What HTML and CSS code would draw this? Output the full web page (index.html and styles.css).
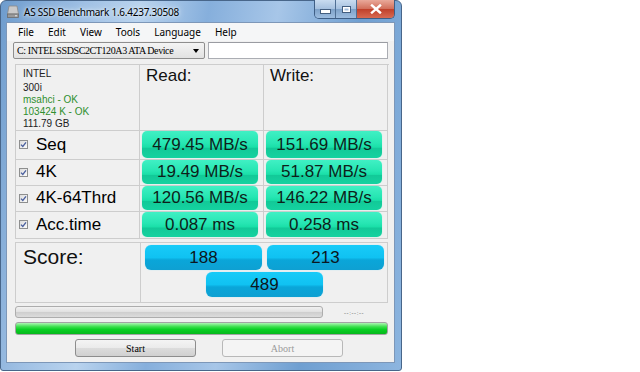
FILE: index.html
```html
<!DOCTYPE html>
<html lang="en">
<head>
  <meta charset="UTF-8">
  <title>AS SSD Benchmark</title>
  <link rel="stylesheet" href="styles.css">
</head>
<body>

  <div class="window">

    <!-- Title bar -->
    <div class="titlebar">
      <svg class="app-icon" width="12" height="13" viewBox="0 0 12 13">
        <path d="M2 1 H10 L11.5 9 H0.5 Z" fill="#c9c9c9" stroke="#8a8a8a" stroke-width="0.8"/>
        <rect x="0.5" y="9" width="11" height="3.5" fill="#9a9a9a" stroke="#6d6d6d" stroke-width="0.8"/>
        <rect x="8" y="10.3" width="2" height="1" fill="#e8e8e8"/>
      </svg>
      <span class="title">AS SSD Benchmark 1.6.4237.30508</span>
      <div class="caption-buttons">
        <span class="cap-btn min"><span class="dash"></span></span>
        <span class="cap-btn max"><span class="square"></span></span>
        <span class="cap-btn close">
          <svg width="12" height="10" viewBox="0 0 12 10">
            <path d="M2 1.5 L10 8.5 M10 1.5 L2 8.5" stroke="#fff" stroke-width="2.4" stroke-linecap="square"/>
          </svg>
        </span>
      </div>
    </div>

    <div class="client">

      <!-- Menu -->
      <ul class="menubar">
        <li>File</li>
        <li>Edit</li>
        <li>View</li>
        <li>Tools</li>
        <li>Language</li>
        <li>Help</li>
      </ul>

      <!-- Drive selection -->
      <div class="toolbar">
        <div class="combo">
          <span>C: INTEL SSDSC2CT120A3 ATA Device</span>
          <span class="arrow"></span>
        </div>
        <div class="textbox"></div>
      </div>

      <!-- Results -->
      <div class="results">
        <div class="cell info">
          <div class="info-first">INTEL</div>
          <div>300i</div>
          <div class="ok">msahci - OK</div>
          <div class="ok">103424 K - OK</div>
          <div>111.79 GB</div>
        </div>
        <div class="cell head">Read:</div>
        <div class="cell head">Write:</div>

        <div class="cell label row-seq"><span class="check"><svg width="7" height="7" viewBox="0 0 7 7"><path d="M1 3.6 L2.8 5.5 L6 1.3" stroke="#4a5f9e" stroke-width="1.3" fill="none"/></svg></span>Seq</div>
        <div class="cell row-seq"><div class="value">479.45 MB/s</div></div>
        <div class="cell row-seq"><div class="value">151.69 MB/s</div></div>

        <div class="cell label"><span class="check"><svg width="7" height="7" viewBox="0 0 7 7"><path d="M1 3.6 L2.8 5.5 L6 1.3" stroke="#4a5f9e" stroke-width="1.3" fill="none"/></svg></span>4K</div>
        <div class="cell"><div class="value">19.49 MB/s</div></div>
        <div class="cell"><div class="value">51.87 MB/s</div></div>

        <div class="cell label"><span class="check"><svg width="7" height="7" viewBox="0 0 7 7"><path d="M1 3.6 L2.8 5.5 L6 1.3" stroke="#4a5f9e" stroke-width="1.3" fill="none"/></svg></span>4K-64Thrd</div>
        <div class="cell"><div class="value">120.56 MB/s</div></div>
        <div class="cell"><div class="value">146.22 MB/s</div></div>

        <div class="cell label row-acc"><span class="check"><svg width="7" height="7" viewBox="0 0 7 7"><path d="M1 3.6 L2.8 5.5 L6 1.3" stroke="#4a5f9e" stroke-width="1.3" fill="none"/></svg></span>Acc.time</div>
        <div class="cell row-acc"><div class="value">0.087 ms</div></div>
        <div class="cell row-acc"><div class="value">0.258 ms</div></div>
      </div>

      <!-- Score -->
      <div class="score">
        <div class="score-label">Score:</div>
        <div class="score-values">
          <div class="score-pair">
            <div class="blue">188</div>
            <div class="blue">213</div>
          </div>
          <div class="blue total">489</div>
        </div>
      </div>

      <!-- Progress -->
      <div class="progress-row">
        <div class="progress"></div>
        <span class="time">--:--:--</span>
      </div>
      <div class="green-bar"></div>

      <div class="buttons">
        <div class="btn">Start</div>
        <div class="btn disabled">Abort</div>
      </div>

    </div>
  </div>

</body>
</html>
```

FILE: styles.css
```css
body {
  margin: 0;
  background-color: #fff;
}

.window {
  width: 402px;
  height: 371px;
  box-sizing: border-box;
  padding: 0 6px 7px 5px;
  border: 1px solid #48668a;
  border-radius: 6px 6px 3px 3px;
  background: linear-gradient(100deg, #6e9ccd 0%, #9fc0e4 18%, #b9d3ee 30%, #86afdc 45%, #a7c6e8 60%, #6f9fd1 78%, #8db5df 100%);
  display: flex;
  flex-direction: column;
}

/* Title bar */
.titlebar {
  height: 21px;
  display: flex;
  align-items: flex-start;
  flex-shrink: 0;
}

.app-icon {
  margin: 4px 0 0 1px;
}

.title {
  margin: 4px 0 0 5px;
  font-family: "Noto Sans", sans-serif;
  font-size: 10px;
  color: #000;
  text-shadow: 0 0 6px #e6f0fa, 0 0 3px #e6f0fa;
  letter-spacing: -0.25px;
}

.caption-buttons {
  margin-left: auto;
  margin-top: -1px;
  display: flex;
  height: 18px;
  border: 1px solid #3e5e85;
  border-top: none;
  border-radius: 0 0 5px 5px;
  overflow: hidden;
}

.cap-btn {
  height: 18px;
  display: flex;
  align-items: center;
  justify-content: center;
  box-sizing: border-box;
}

.cap-btn.min,
.cap-btn.max {
  width: 21px;
  background: linear-gradient(#c9dcf0, #a6c1df 48%, #7ea2c9 52%, #9dbde0);
  border-right: 1px solid #4f6f94;
}

.cap-btn.close {
  width: 37px;
  background: linear-gradient(#e9a99a, #d2705c 48%, #c0412b 52%, #d86a52);
}

.dash {
  width: 9px;
  height: 3px;
  margin-top: 5px;
  background-color: #fff;
  border: 1px solid #445f80;
}

.square {
  width: 7px;
  height: 5px;
  border: 1px solid #445f80;
  box-shadow: inset 0 0 0 1.5px #fff;
  background-color: #a6c1df;
}

/* Client area */
.client {
  flex: 1;
  background-color: #f0f0f0;
  border: 1px solid #7d97b8;
}

.menubar {
  list-style: none;
  margin: 0;
  padding: 0 0 0 4px;
  height: 18px;
  display: flex;
  font-family: "Noto Sans", sans-serif;
  font-size: 10px;
  line-height: 19px;
  background-color: #f5f6f7;
}

.menubar li {
  padding: 0 7px;
}

.toolbar {
  display: flex;
  margin: 1px 0 0 6px;
  height: 17px;
}

.combo {
  width: 192px;
  box-sizing: border-box;
  border: 1px solid #8e8e8e;
  border-radius: 2px;
  background: linear-gradient(#f4f4f4, #e2e2e2);
  display: flex;
  align-items: center;
  padding-left: 3px;
  font-family: "Liberation Serif", serif;
  font-size: 10px;
  letter-spacing: -0.4px;
  color: #000;
}

.arrow {
  margin-left: auto;
  margin-right: 5px;
  width: 0;
  height: 0;
  border-left: 3.5px solid transparent;
  border-right: 3.5px solid transparent;
  border-top: 4px solid #000;
}

.textbox {
  width: 180px;
  margin-left: 3px;
  box-sizing: border-box;
  background-color: #fff;
  border: 1px solid #abadb3;
  border-top-color: #9a9ca2;
}

/* Results grid */
.results {
  margin: 5px 0 0 8px;
  width: 373px;
  display: grid;
  grid-template-columns: 124px 124px 124px;
  grid-template-rows: 66px 29px 26px 26px 27px;
  border-top: 1px solid #cdcdcd;
  border-left: 1px solid #cdcdcd;
  font-family: "Liberation Sans", Arial, sans-serif;
}

.cell {
  border-right: 1px solid #cdcdcd;
  border-bottom: 1px solid #cdcdcd;
  box-sizing: border-box;
  padding: 0 4px 1px 2px;
  display: flex;
  align-items: center;
}

.info {
  display: block;
  padding: 3px 0 0 7px;
  font-family: "Liberation Sans", Arial, sans-serif;
  font-size: 10px;
  line-height: 12px;
  color: #222;
}

.info-first {
  margin-bottom: 2px;
}

.ok {
  color: #2f8f2f;
}

.head {
  align-items: flex-start;
  padding: 1px 0 0 6px;
  font-size: 17px;
  color: #111;
}

.label {
  padding-left: 3px;
  font-size: 17px;
  color: #000;
}

.check {
  width: 9px;
  height: 9px;
  box-sizing: border-box;
  border: 1px solid #8e8f8f;
  background: linear-gradient(135deg, #dcdcdc, #fbfbfb);
  display: inline-flex;
  align-items: center;
  justify-content: center;
  margin-right: 8px;
}

.value {
  width: 116px;
  height: 24px;
  border-radius: 5px;
  background: linear-gradient(#40f0c4 0%, #27e6b3 45%, #1adfa8 60%, #12c998 64%, #15d2a0 100%);
  box-shadow: 0 0 1px #7ef5d3;
  display: flex;
  align-items: center;
  justify-content: center;
  font-size: 17px;
  color: #0d1f1a;
}

.row-seq .value {
  height: 27px;
}

.row-acc .value {
  height: 25px;
}

/* Score */
.score {
  margin: 3px 0 0 8px;
  width: 373px;
  height: 61px;
  box-sizing: border-box;
  border: 1px solid #cdcdcd;
  display: flex;
  font-family: "Liberation Sans", Arial, sans-serif;
}

.score-label {
  width: 125px;
  box-sizing: border-box;
  border-right: 1px solid #cdcdcd;
  padding: 2px 0 0 7px;
  font-size: 21px;
  color: #111;
}

.score-values {
  flex: 1;
  padding: 2px 0 0 4px;
  display: flex;
  flex-direction: column;
}

.score-pair {
  display: flex;
  gap: 5px;
}

.blue {
  width: 117px;
  height: 25px;
  border-radius: 6px;
  background: linear-gradient(#18cbf8 0%, #10c2f2 50%, #0aa6d9 60%, #0ea0d2 100%);
  box-shadow: 0 0 1px #7fdcf8;
  display: flex;
  align-items: center;
  justify-content: center;
  font-size: 17px;
  color: #0b1620;
}

.blue.total {
  margin: 2px 0 0 61px;
}

/* Progress */
.progress-row {
  display: flex;
  align-items: center;
  margin: 3px 0 0 8px;
  height: 12px;
}

.progress {
  width: 308px;
  height: 12px;
  box-sizing: border-box;
  border: 1px solid #adadad;
  border-radius: 3px;
  background: linear-gradient(#f2f2f2, #e2e2e2 45%, #cfcfcf 55%, #dcdcdc);
}

.time {
  margin: 2px 0 0 21px;
  font-family: "Liberation Sans", sans-serif;
  font-size: 6px;
  color: #555;
  letter-spacing: 0.6px;
}

.green-bar {
  margin: 4px 0 0 8px;
  width: 373px;
  height: 13px;
  box-sizing: border-box;
  border: 1px solid #a3a3a3;
  border-radius: 3px;
  background: linear-gradient(#aef5b4 0%, #38df4a 35%, #09cf23 60%, #07b81c 100%);
}

.buttons {
  display: flex;
  margin: 4px 0 0 68px;
}

.btn {
  width: 121px;
  height: 18px;
  box-sizing: border-box;
  border: 1px solid #8d8d8d;
  border-radius: 3px;
  background: linear-gradient(#f4f4f4, #ebebeb 48%, #dcdcdc 52%, #d0d0d0);
  display: flex;
  align-items: center;
  justify-content: center;
  font-family: "Liberation Serif", serif;
  font-size: 10px;
  color: #000;
}

.btn.disabled {
  margin-left: 26px;
  border-color: #b8b8b8;
  background: #f4f4f4;
  color: #9a9a9a;
}
```
